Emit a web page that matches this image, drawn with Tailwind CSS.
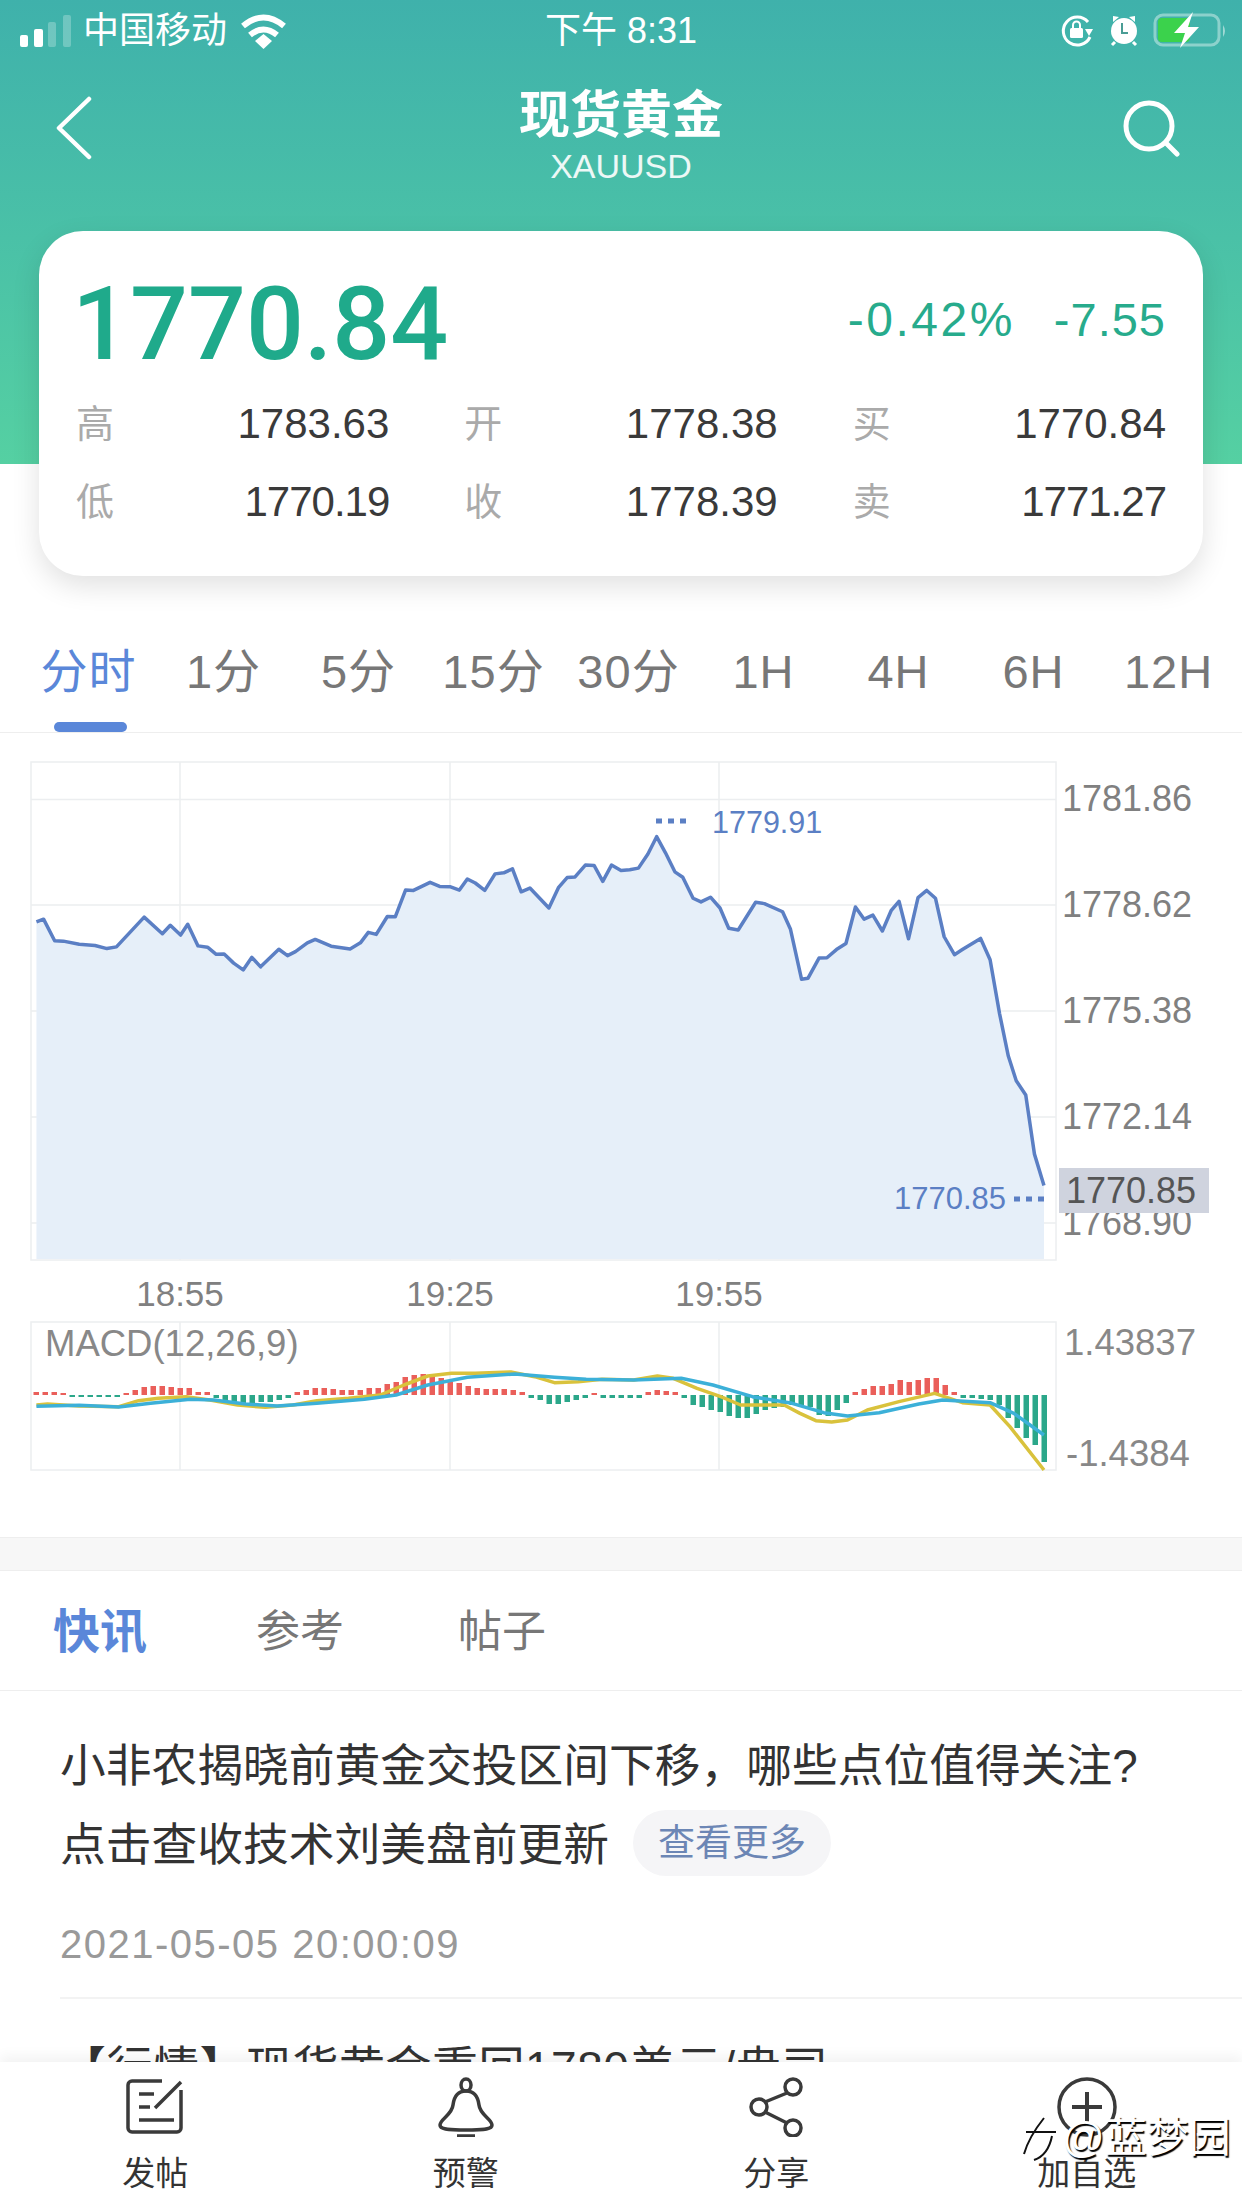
<!DOCTYPE html>
<html lang="zh-CN">
<head>
  <meta charset="UTF-8" />
  <title>现货黄金 XAUUSD</title>
  <script src="https://cdn.jsdelivr.net/npm/@tailwindcss/browser@4"></script>
</head>
<body class="bg-white">
<div class="relative w-[1242px] h-[2208px] overflow-hidden bg-white text-[#333] font-['Liberation_Sans','Noto_Sans_CJK_SC',sans-serif]">

  <!-- Green header -->
  <div class="h-[464px] bg-linear-to-b from-[#3fb1ab] to-[#55d0a2] text-white">
    <!-- Status bar -->
    <div class="h-[62px] grid grid-cols-3 items-center">
      <div class="flex items-center pl-[20px]">
        <svg class="w-[52px] h-[34px]" viewBox="20 13 52 34" fill="#fff">
          <rect x="20" y="34" width="8" height="12" rx="2"/>
          <rect x="34" y="28" width="9" height="18" rx="2"/>
          <rect x="48" y="21" width="8" height="25" rx="2" fill-opacity=".25"/>
          <rect x="63" y="14" width="8" height="32" rx="2" fill-opacity=".25"/>
        </svg>
        <span class="ml-[11px] text-[36px] leading-none">中国移动</span>
        <svg class="ml-[13px] w-[48px] h-[36px]" viewBox="242 11 48 36" fill="none" stroke="#fff" stroke-width="6">
          <path d="M245 24Q265.500 7 286 24"/>
          <path d="M252 33Q265.500 22 279 33"/>
          <path d="M257 39L265.500 32L274 39L265.500 47Z" fill="#fff" stroke="none"/>
        </svg>
      </div>
      <div class="text-center text-[36px] leading-none">下午 8:31</div>
      <div class="flex justify-end pr-[14px]">
        <svg class="w-[170px] h-[42px]" viewBox="1058 10 170 42" fill="none">
          <!-- rotation lock -->
          <path d="M1088 22A14 14 0 1 0 1090 37" stroke="#fff" stroke-width="3"/>
          <path d="M1085 29H1093L1089 36Z" fill="#fff"/>
          <rect x="1070" y="28" width="13" height="10" rx="1.500" fill="#fff"/>
          <path d="M1073 28V25A3.500 3.500 0 0 1 1080 25V28" stroke="#fff" stroke-width="2"/>
          <!-- alarm -->
          <circle cx="1124" cy="31" r="13" fill="#fff"/>
          <path d="M1113 22L1119 17L1113 16Z" fill="#fff"/>
          <path d="M1135 22L1129 17L1135 16Z" fill="#fff"/>
          <path d="M1115 42L1112 45M1133 42L1136 45" stroke="#fff" stroke-width="3"/>
          <path d="M1122 23V33H1128" stroke="#4a9d95" stroke-width="2"/>
          <!-- battery -->
          <rect x="1155" y="15" width="64" height="30" rx="8" stroke="#fff" stroke-opacity=".4" stroke-width="3"/>
          <rect x="1158" y="18" width="32" height="24" rx="4" fill="#3bd24c"/>
          <path d="M1223 25Q1227 31 1223 37Z" fill="#fff" fill-opacity=".5"/>
          <path d="M1193 12L1174 33H1185L1180 48L1199 27H1188Z" fill="#fff"/>
        </svg>
      </div>
    </div>
    <!-- Title bar -->
    <div class="grid grid-cols-[180px_1fr_180px] pt-[24px]">
      <div class="pl-[55px]">
        <svg class="mt-[10px] w-[40px] h-[64px]" viewBox="0 0 40 64" fill="none" stroke="#fff" stroke-width="4.500" stroke-linecap="round" stroke-linejoin="round">
          <path d="M34 3L4 32L34 61"/>
        </svg>
      </div>
      <div class="text-center">
        <div class="text-[51px] leading-[60px] font-bold">现货黄金</div>
        <div class="text-[34px] leading-[40px] text-white/90">XAUUSD</div>
      </div>
      <div class="flex justify-end pr-[62px]">
        <svg class="mt-[12px] w-[60px] h-[60px]" viewBox="0 0 60 60" fill="none" stroke="#fff" stroke-linecap="round">
          <circle cx="29" cy="28" r="23" stroke-width="5"/>
          <path d="M46 45L57 56" stroke-width="5"/>
        </svg>
      </div>
    </div>
  </div>

  <!-- Quote card -->
  <div class="relative mt-[-233px] mx-[39px] h-[345px] px-[37px] pt-[43px] rounded-[44px] bg-white shadow-[0_10px_28px_rgba(0,0,0,0.12)]">
    <div class="flex items-center justify-between h-[100px]">
      <div class="-ml-[4px] text-[102px] leading-[100px] font-medium text-[#1faa8b] font-['Roboto',sans-serif]">1770.84</div>
      <div class="mb-[8px] flex gap-[39px] text-[47px] tracking-[1px] leading-none text-[#27ab8c]">
        <span class="text-[48px] tracking-[2.500px]">-0.42%</span>
        <span>-7.55</span>
      </div>
    </div>
    <div class="mt-[11px] grid grid-cols-3 gap-x-[75px] text-[42px] leading-[78px] text-[#3a3a3a]">
      <div class="flex justify-between"><span class="text-[38px] text-[#aaa]">高</span><span>1783.63</span></div>
      <div class="flex justify-between"><span class="text-[38px] text-[#aaa]">开</span><span>1778.38</span></div>
      <div class="flex justify-between"><span class="text-[38px] text-[#aaa]">买</span><span>1770.84</span></div>
      <div class="flex justify-between"><span class="text-[38px] text-[#aaa]">低</span><span class="tracking-[-1px]">1770.19</span></div>
      <div class="flex justify-between"><span class="text-[38px] text-[#aaa]">收</span><span>1778.39</span></div>
      <div class="flex justify-between"><span class="text-[38px] text-[#aaa]">卖</span><span class="tracking-[-1px]">1771.27</span></div>
    </div>
  </div>

  <!-- Period tabs -->
  <div class="mt-[44px] pl-[21px] pr-[6px] pb-[8px] grid grid-cols-9 border-b border-[#eee] text-[47px] tracking-[1px] text-[#777]">
    <div class="relative h-[104px] flex items-center justify-center text-[#5a87d9]">分时
      <div class="absolute left-[33px] top-[102px] w-[73px] h-[10px] rounded-full bg-[#5a87d9]"></div>
    </div>
    <div class="h-[104px] flex items-center justify-center">1分</div>
    <div class="h-[104px] flex items-center justify-center">5分</div>
    <div class="h-[104px] flex items-center justify-center">15分</div>
    <div class="h-[104px] flex items-center justify-center">30分</div>
    <div class="h-[104px] flex items-center justify-center">1H</div>
    <div class="h-[104px] flex items-center justify-center">4H</div>
    <div class="h-[104px] flex items-center justify-center">6H</div>
    <div class="h-[104px] flex items-center justify-center">12H</div>
  </div>

  <!-- Chart: viewBox uses page coordinates -->
  <svg class="block w-[1242px] h-[804px]" viewBox="0 733 1242 804" font-family="Liberation Sans">
    <!-- price grid -->
    <g stroke="#eceef0" stroke-width="1.500" fill="none">
      <rect x="31" y="762" width="1025" height="498"/>
      <path d="M31 799.500H1056M31 905H1056M31 1011H1056M31 1117H1056M31 1223H1056"/>
      <path d="M180 762V1260M450 762V1260M719 762V1260"/>
    </g>
    <g transform="translate(0 740) scale(.79208 .33806)">
      <polygon fill="#e6eff9" points="46,1535 46,538 55,530 69,594 80,595 100,604 120,608 135,617 147,612 182,524 205,573 215,548 228,577 237,545 250,609 262,613 273,634 283,633 295,660 307,680 318,643 329,671 352,619 363,638 373,626 388,600 398,590 418,610 442,618 455,600 465,569 475,575 489,522 499,523 512,444 522,445 543,421 555,433 568,434 580,444 590,411 600,423 612,445 625,396 636,393 647,381 658,449 669,438 693,497 705,437 716,407 726,405 739,370 750,371 761,418 772,370 784,386 795,384 806,379 818,337 829,286 840,333 852,390 862,406 875,468 885,479 897,465 909,497 920,557 932,562 954,480 965,484 988,508 998,560 1012,708 1020,705 1034,645 1044,644 1056,620 1068,602 1080,494 1091,530 1102,518 1114,565 1125,505 1135,477 1147,588 1159,466 1170,445 1181,468 1192,582 1205,635 1215,620 1238,587 1250,650 1262,810 1273,935 1283,1008 1295,1050 1306,1225 1318,1318 1318,1535"/>
      <polyline fill="none" stroke="#5b7fc4" stroke-width="3.500" stroke-linejoin="round" vector-effect="non-scaling-stroke" points="46,538 55,530 69,594 80,595 100,604 120,608 135,617 147,612 182,524 205,573 215,548 228,577 237,545 250,609 262,613 273,634 283,633 295,660 307,680 318,643 329,671 352,619 363,638 373,626 388,600 398,590 418,610 442,618 455,600 465,569 475,575 489,522 499,523 512,444 522,445 543,421 555,433 568,434 580,444 590,411 600,423 612,445 625,396 636,393 647,381 658,449 669,438 693,497 705,437 716,407 726,405 739,370 750,371 761,418 772,370 784,386 795,384 806,379 818,337 829,286 840,333 852,390 862,406 875,468 885,479 897,465 909,497 920,557 932,562 954,480 965,484 988,508 998,560 1012,708 1020,705 1034,645 1044,644 1056,620 1068,602 1080,494 1091,530 1102,518 1114,565 1125,505 1135,477 1147,588 1159,466 1170,445 1181,468 1192,582 1205,635 1215,620 1238,587 1250,650 1262,810 1273,935 1283,1008 1295,1050 1306,1225 1318,1318"/>
    </g>
    <!-- price axis -->
    <g font-size="36" fill="#808080">
      <text x="1062" y="811">1781.86</text>
      <text x="1062" y="917">1778.62</text>
      <text x="1062" y="1023">1775.38</text>
      <text x="1062" y="1129">1772.14</text>
      <text x="1062" y="1235">1768.90</text>
    </g>
    <rect x="1059" y="1168" width="150" height="45" fill="#cfd3de"/>
    <text x="1066" y="1203" font-size="36" fill="#555">1770.85</text>
    <!-- high / low marks -->
    <path d="M656 821H688M1014 1199H1044" stroke="#5b7fc4" stroke-width="5" stroke-dasharray="6 6"/>
    <text x="712" y="833" font-size="30.500" fill="#5b7fc4">1779.91</text>
    <text x="894" y="1209" font-size="31" fill="#5b7fc4">1770.85</text>
    <!-- time axis -->
    <g font-size="35" fill="#808080" text-anchor="middle">
      <text x="180" y="1306">18:55</text>
      <text x="450" y="1306">19:25</text>
      <text x="719" y="1306">19:55</text>
    </g>
    <!-- MACD -->
    <g stroke="#eceef0" stroke-width="1.500" fill="none">
      <rect x="31" y="1322" width="1025" height="148"/>
      <path d="M180 1322V1470M450 1322V1470M719 1322V1470"/>
    </g>
    <g id="macdBars"></g>
    <g transform="translate(0 1290) scale(.79208 .33333)" fill="none" stroke-linejoin="round">
      <polyline stroke="#d9c23c" stroke-width="3.500" vector-effect="non-scaling-stroke" points="46,345 60,342 100,348 150,350 175,332 200,325 235,320 265,330 300,345 335,352 370,345 400,332 440,325 480,315 510,285 540,258 570,250 600,250 645,246 675,260 700,278 730,275 760,268 800,270 830,258 850,265 880,295 910,320 935,345 960,345 990,345 1010,370 1030,392 1050,396 1070,390 1095,360 1135,335 1180,310 1215,338 1250,345 1275,410 1318,540"/>
      <polyline stroke="#3cb0d8" stroke-width="3.500" vector-effect="non-scaling-stroke" points="46,349 100,346 150,351 190,340 240,328 270,330 310,342 350,348 400,340 460,328 500,315 540,285 590,262 650,252 700,262 740,268 800,270 860,265 900,285 950,320 1000,340 1040,368 1070,378 1110,368 1160,342 1190,330 1250,338 1280,370 1318,435"/>
    </g>
    <g font-size="36.500" fill="#888">
      <text x="45" y="1356">MACD(12,26,9)</text>
      <text x="1064" y="1355">1.43837</text>
      <text x="1066" y="1466">-1.4384</text>
    </g>
  </svg>

  <div class="h-[34px] bg-[#f7f7f7] border-y border-[#eee]"></div>

  <!-- News tabs -->
  <div class="h-[120px] pl-[53px] pt-[3px] flex items-center border-b border-[#eee] text-[44px] text-[#777]">
    <div class="w-[203px] text-[47px] font-bold text-[#5a87d9]">快讯</div>
    <div class="w-[202px]">参考</div>
    <div class="w-[202px]">帖子</div>
  </div>

  <!-- News list -->
  <div class="pt-[36px] pl-[60px] text-[45.750px] leading-[79px]">
    <div>小非农揭晓前黄金交投区间下移，哪些点位值得关注?</div>
    <div class="flex items-center">
      <span>点击查收技术刘美盘前更新</span>
      <span class="ml-[24px] -mt-[5px] w-[198px] h-[66px] flex items-center justify-center rounded-full bg-[#f5f5f7] text-[37px] text-[#6c86b5]">查看更多</span>
    </div>
    <div class="mt-[34px] text-[40px] leading-[50px] tracking-[1.500px] text-[#999]">2021-05-05 20:00:09</div>
    <div class="mt-[28px] border-t-2 border-[#f3f3f3]"></div>
    <div class="mt-[30px] text-[46px] tracking-[.5px]">【行情】现货黄金重回1780美元/盎司</div>
  </div>

  <!-- Bottom toolbar -->
  <div class="absolute left-0 right-0 bottom-0 h-[146px] pt-[15px] grid grid-cols-4 bg-white shadow-[0_-6px_12px_rgba(0,0,0,0.05)] text-[33px] leading-[40px] text-[#333]">
    <div class="flex flex-col items-center">
      <svg class="w-[60px] h-[60px]" viewBox="0 0 60 60" fill="none" stroke="#3a3a3a" stroke-width="3.500">
        <path d="M37 4H7A4 4 0 0 0 3 8V51A4 4 0 0 0 7 55H52A4 4 0 0 0 56 51V13"/>
        <path d="M56 5L30 31M14 17H29M14 30H25M14 43H49"/>
      </svg>
      <span class="mt-[17px]">发帖</span>
    </div>
    <div class="flex flex-col items-center">
      <svg class="w-[60px] h-[60px]" viewBox="0 0 60 60" fill="none" stroke="#3a3a3a" stroke-width="3.500">
        <ellipse cx="30" cy="8" rx="5" ry="6"/>
        <path d="M30 14C21 14 18 20 17 28C16 38 4 42 4 48C4 52 10 53 30 53C50 53 56 52 56 48C56 42 44 38 43 28C42 20 39 14 30 14Z"/>
        <path d="M21 59H39"/>
      </svg>
      <span class="mt-[17px]">预警</span>
    </div>
    <div class="flex flex-col items-center">
      <svg class="w-[60px] h-[60px]" viewBox="0 0 60 60" fill="none" stroke="#3a3a3a" stroke-width="3.500">
        <circle cx="47" cy="10" r="8"/>
        <circle cx="13" cy="30" r="8"/>
        <circle cx="47" cy="51" r="8"/>
        <path d="M41 16L19 25M19 35L41 46"/>
      </svg>
      <span class="mt-[17px]">分享</span>
    </div>
    <div class="flex flex-col items-center">
      <svg class="w-[60px] h-[60px]" viewBox="0 0 60 60" fill="none" stroke="#3a3a3a" stroke-width="3.500">
        <circle cx="30" cy="30" r="28"/>
        <path d="M30 15V45M15 30H45" stroke-width="4"/>
      </svg>
      <span class="mt-[17px]">加自选</span>
    </div>
  </div>

  <!-- Watermark over toolbar -->
  <div class="absolute left-[1018px] top-[2114px] flex items-center text-[42px] leading-[48px] text-white [text-shadow:1.500px_1.500px_1px_#000]">
    <svg class="w-[44px] h-[48px]" viewBox="0 0 44 48" fill="none" stroke="#111" stroke-width="2">
      <path d="M26 4C18 14 10 26 6 40M8 18H38M34 22C32 32 28 42 16 46"/>
    </svg>
    <span>@蓝梦园</span>
  </div>
</div>

<script>
  // MACD histogram, heights in px (up is red, down is green)
  const macd = [3,3,3,2,-2,-2,-2,-2,-2,-2,2,5,8,9,9,8,7,7,3,3,-3,-5,-7,-8,-8,-7,-7,-5,-3,
    3,5,7,7,6,5,5,5,7,7,11,13,18,20,21,20,17,13,12,9,7,6,6,6,5,3,
    -3,-5,-9,-9,-7,-5,-3,2,-3,-3,-3,-3,-3,3,5,4,3,
    -3,-10,-12,-15,-17,-21,-23,-23,-19,-15,-13,-12,-10,-10,-12,-20,-21,-15,-8,
    3,6,9,9,11,15,13,15,17,17,10,3,
    -3,-3,-4,-5,-10,-23,-33,-43,-50,-67];
  const svgNs = "http://www.w3.org/2000/svg";
  const group = document.getElementById("macdBars");
  macd.forEach((v, i) => {
    const r = document.createElementNS(svgNs, "rect");
    r.setAttribute("x", 33.500 + i * 9);
    r.setAttribute("y", v > 0 ? 1395 - v : 1395);
    r.setAttribute("width", 5.500);
    r.setAttribute("height", Math.abs(v));
    r.setAttribute("fill", v > 0 ? "#ea5f5a" : "#2ba78a");
    group.appendChild(r);
  });
</script>
</body>
</html>
